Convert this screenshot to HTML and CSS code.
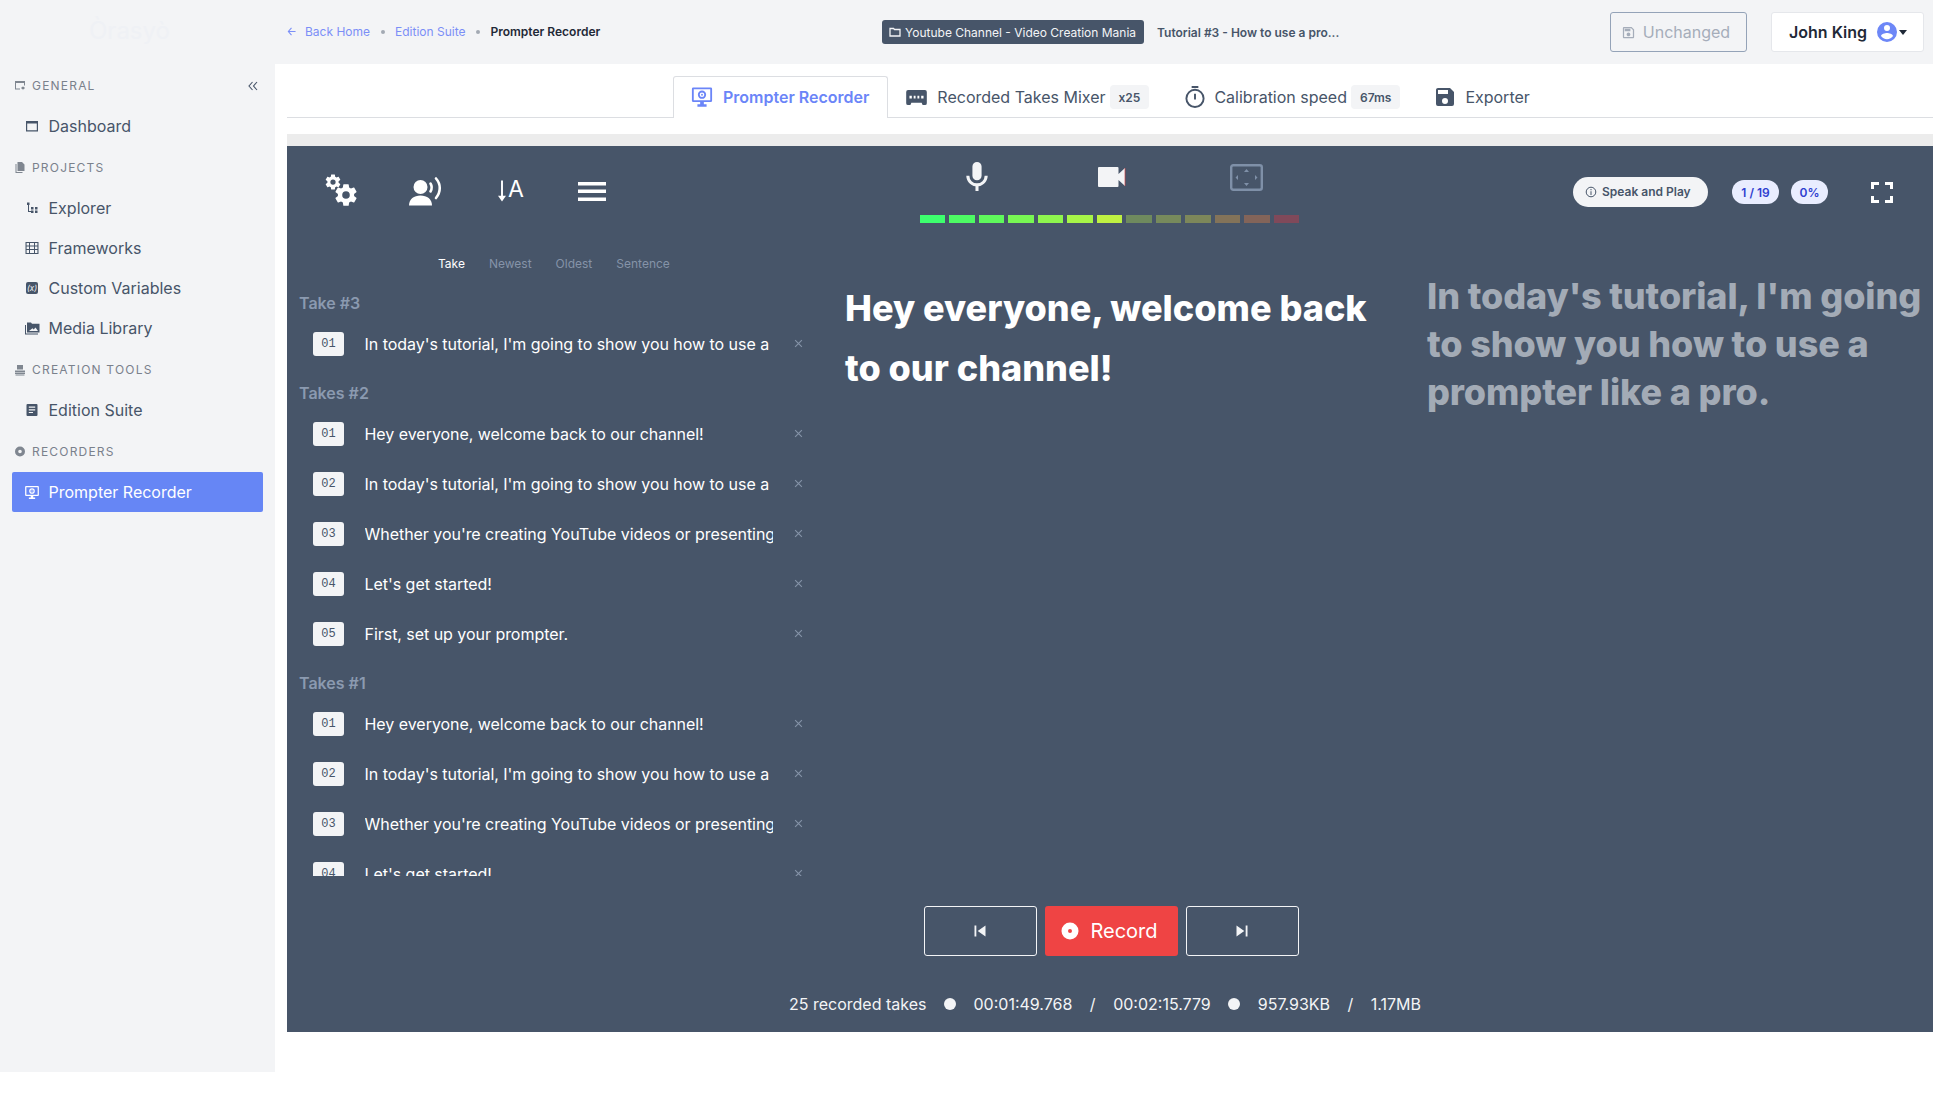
FILE: index.html
```html
<!DOCTYPE html>
<html lang="en">
<head>
<meta charset="utf-8">
<title>Prompter Recorder</title>
<link rel="stylesheet" href="styles.css">
</head>
<body>
<svg class="defs" width="0" height="0" aria-hidden="true">
  <symbol id="cog" viewBox="0 0 24 24"><path d="M12,15.5A3.5,3.5 0 0,1 8.5,12A3.5,3.5 0 0,1 12,8.5A3.5,3.5 0 0,1 15.5,12A3.5,3.5 0 0,1 12,15.5M19.43,12.97C19.47,12.65 19.5,12.33 19.5,12C19.5,11.67 19.47,11.34 19.43,11L21.54,9.37C21.73,9.22 21.78,8.95 21.66,8.73L19.66,5.27C19.54,5.05 19.27,4.96 19.05,5.05L16.56,6.05C16.04,5.66 15.5,5.32 14.87,5.07L14.5,2.42C14.46,2.18 14.25,2 14,2H10C9.75,2 9.54,2.18 9.5,2.42L9.13,5.07C8.5,5.32 7.96,5.66 7.44,6.05L4.95,5.05C4.73,4.96 4.46,5.05 4.34,5.27L2.34,8.73C2.21,8.95 2.27,9.22 2.46,9.37L4.57,11C4.53,11.34 4.5,11.67 4.5,12C4.5,12.33 4.53,12.65 4.57,12.97L2.46,14.63C2.27,14.78 2.21,15.05 2.34,15.27L4.34,18.73C4.46,18.95 4.73,19.03 4.95,18.95L7.44,17.94C7.96,18.34 8.5,18.68 9.13,18.93L9.5,21.58C9.54,21.82 9.75,22 10,22H14C14.25,22 14.46,21.82 14.5,21.58L14.87,18.93C15.5,18.67 16.04,18.34 16.56,17.94L19.05,18.95C19.27,19.03 19.54,18.95 19.66,18.73L21.66,15.27C21.78,15.05 21.73,14.78 21.54,14.63L19.43,12.97Z"/></symbol>
  <symbol id="monitor" viewBox="0 0 24 24"><path fill-rule="evenodd" d="M2.5 1.5H21.5A1.5 1.5 0 0 1 23 3V16A1.5 1.5 0 0 1 21.5 17.5H14V20H17V22.5H7V20H10V17.5H2.5A1.5 1.5 0 0 1 1 16V3A1.5 1.5 0 0 1 2.5 1.5ZM3 3.5V15.5H21V3.5ZM12 5A4.5 4.5 0 1 1 12 14A4.5 4.5 0 1 1 12 5ZM12 7A2.5 2.5 0 1 0 12 12A2.5 2.5 0 1 0 12 7ZM12 8.5A1 1 0 1 1 12 10.5A1 1 0 1 1 12 8.5Z"/></symbol>
</svg>

<header class="topbar">
  <div class="logo">Òrasyò</div>
  <nav class="crumbs">
    <svg class="crumb-arrow" viewBox="0 0 10 10"><path d="M5 1 1.5 5 5 9M1.5 5H9.5"/></svg>
    <a class="crumb-link">Back Home</a>
    <i class="crumb-dot"></i>
    <a class="crumb-link">Edition Suite</a>
    <i class="crumb-dot"></i>
    <b class="crumb-current">Prompter Recorder</b>
  </nav>
  <div class="chip">
    <svg class="chip-icon" viewBox="0 0 12 12"><path d="M1 2.5H4.5L5.5 3.5H11V10H1Z"/></svg>
    <span>Youtube Channel - Video Creation Mania</span>
  </div>
  <div class="doc-title">Tutorial #3 - How to use a pro...</div>
  <div class="top-actions">
    <button class="btn-unchanged">
      <svg class="ico-16" viewBox="0 0 24 24"><path d="M17 3H5C3.89 3 3 3.9 3 5V19C3 20.1 3.89 21 5 21H19C20.1 21 21 20.1 21 19V7L17 3M19 19H5V5H16.17L19 7.83V19M12 12C10.34 12 9 13.34 9 15S10.34 18 12 18 15 16.66 15 15 13.66 12 12 12M6 6H15V10H6V6Z"/></svg>
      Unchanged
    </button>
    <button class="btn-user">
      <span>John King</span>
      <svg class="user-ico" viewBox="0 0 24 24"><path d="M12,19.2C9.5,19.2 7.29,17.92 6,16C6.03,14 10,12.9 12,12.9C14,12.9 17.97,14 18,16C16.71,17.92 14.5,19.2 12,19.2M12,5A3,3 0 0,1 15,8A3,3 0 0,1 12,11A3,3 0 0,1 9,8A3,3 0 0,1 12,5M12,2A10,10 0 0,0 2,12A10,10 0 0,0 12,22A10,10 0 0,0 22,12A10,10 0 0,0 12,2Z"/></svg>
      <i class="caret"></i>
    </button>
  </div>
</header>

<div class="layout">
  <aside class="sidebar">
    <div class="side-head">
      <svg class="sec-ico" viewBox="0 0 12 12"><path fill-rule="evenodd" d="M1 1.5H11V6H10V3.5H2V9H6V10H1ZM9 6.5 9.5 7.5 10.7 7.5 10.2 8.5 10.7 9.5 9.5 9.5 9 10.8 8.5 9.5 7.3 9.5 7.8 8.5 7.3 7.5 8.5 7.5Z"/></svg>
      <span>General</span>
      <svg class="collapse" viewBox="0 0 10 10"><path d="M4.5 1 1 5 4.5 9M9 1 5.5 5 9 9"/></svg>
    </div>
    <a class="nav-item">
      <svg class="nav-ico" viewBox="0 0 14 14"><path fill-rule="evenodd" d="M1 2H13V12.5H1ZM2.2 4.6V11.3H11.8V4.6Z"/></svg>
      Dashboard
    </a>
    <div class="side-head">
      <svg class="sec-ico" viewBox="0 0 12 12"><path d="M3.5 0.5H8L10.5 3V9.5H3.5ZM2.5 2.5V10.5H8.5V11.5H1.5V2.5Z"/></svg>
      <span>Projects</span>
    </div>
    <a class="nav-item">
      <svg class="nav-ico" viewBox="0 0 14 14"><path d="M2 1.5H4.5V4H2ZM3 4H4V10H6V11H3ZM6 6H8.5V8.5H6ZM6 9.5H8.5V12H6ZM10 6H12.5V8.5H10ZM10 9.5H12.5V12H10Z"/></svg>
      Explorer
    </a>
    <a class="nav-item">
      <svg class="nav-ico" viewBox="0 0 14 14"><path fill-rule="evenodd" d="M0.5 1H13.5V13H0.5ZM1.6 2.1V4.4H4V2.1ZM5 2.1V4.4H9V2.1ZM10 2.1V4.4H12.4V2.1ZM1.6 5.4V8H4V5.4ZM5 5.4V8H9V5.4ZM10 5.4V8H12.4V5.4ZM1.6 9V11.9H4V9ZM5 9V11.9H9V9ZM10 9V11.9H12.4V9Z"/></svg>
      Frameworks
    </a>
    <a class="nav-item">
      <svg class="nav-ico" viewBox="0 0 14 14"><rect x="1" y="1" width="12" height="12" rx="2"/><text class="var-text" x="7" y="9.8">(x)</text></svg>
      Custom Variables
    </a>
    <a class="nav-item">
      <svg class="nav-ico nav-ico-wide" viewBox="0 0 16 14"><path fill-rule="evenodd" d="M3 1H7L8 2.2H15.5V11H3ZM5 9.5H14L11.5 6 9.7 8 8.5 6.8ZM1 3.5H2V12H14V13H1Z"/></svg>
      Media Library
    </a>
    <div class="side-head">
      <svg class="sec-ico" viewBox="0 0 12 12"><path d="M3 1.5H9V6H3ZM1 7H11V9H1ZM1 9.5H11V10.5H1ZM1.5 11H10.5V12H1.5Z"/></svg>
      <span>Creation Tools</span>
    </div>
    <a class="nav-item">
      <svg class="nav-ico" viewBox="0 0 14 14"><path fill-rule="evenodd" d="M2.5 1H11.5A1 1 0 0 1 12.5 2V12A1 1 0 0 1 11.5 13H2.5A1 1 0 0 1 1.5 12V2A1 1 0 0 1 2.5 1ZM3.8 3.5V4.7H10.2V3.5ZM3.8 6.2V7.4H10.2V6.2ZM3.8 8.9V10.1H8V8.9Z"/></svg>
      Edition Suite
    </a>
    <div class="side-head">
      <svg class="sec-ico" viewBox="0 0 12 12"><path fill-rule="evenodd" d="M6 1A5 5 0 1 1 6 11A5 5 0 1 1 6 1ZM6 4.2A1.8 1.8 0 1 0 6 7.8A1.8 1.8 0 1 0 6 4.2Z"/></svg>
      <span>Recorders</span>
    </div>
    <a class="nav-item nav-active">
      <svg class="nav-ico nav-ico-wide"><use href="#monitor"/></svg>
      Prompter Recorder
    </a>
  </aside>

  <main class="main">
    <div class="tabs">
      <a class="tab tab-active">
        <svg class="tab-ico"><use href="#monitor"/></svg>
        Prompter Recorder
      </a>
      <a class="tab">
        <svg class="tab-ico tab-ico-tape" viewBox="1 4 22 16"><path fill-rule="evenodd" d="M3 4H21A2 2 0 0 1 23 6V18A2 2 0 0 1 21 20H18.5L17.5 17.5H6.5L5.5 20H3A2 2 0 0 1 1 18V6A2 2 0 0 1 3 4ZM4.5 10V13H7V10ZM9 10V13H11V10ZM13 10V13H15V10ZM17 10V13H19.5V10Z"/></svg>
        Recorded Takes Mixer
        <span class="tab-badge">x25</span>
      </a>
      <a class="tab">
        <svg class="tab-ico tab-ico-watch" viewBox="2 1 20 23"><path fill-rule="evenodd" d="M8.5 1H15.5V3H8.5ZM12 4A10 10 0 1 1 12 24A10 10 0 1 1 12 4ZM12 6A8 8 0 1 0 12 22A8 8 0 1 0 12 6ZM11 9H13V15H11Z"/></svg>
        Calibration speed
        <span class="tab-badge">67ms</span>
      </a>
      <a class="tab">
        <svg class="tab-ico tab-ico-save" viewBox="3 3 18 18"><path d="M15,9H5V5H15M12,19A3,3 0 0,1 9,16A3,3 0 0,1 12,13A3,3 0 0,1 15,16A3,3 0 0,1 12,19M17,3H5C3.89,3 3,3.9 3,5V19A2,2 0 0,0 5,21H19A2,2 0 0,0 21,19V7L17,3Z"/></svg>
        Exporter
      </a>
    </div>
    <div class="strip"></div>

    <section class="panel">
      <div class="toolbar">
        <div class="tools">
          <span class="tool">
            <span class="gears">
              <svg class="gear-s"><use href="#cog"/></svg>
              <svg class="gear-l"><use href="#cog"/></svg>
            </span>
          </span>
          <span class="tool">
            <svg class="ico-speak" viewBox="0 0 34 30"><circle cx="11.5" cy="11" r="7"/><path d="M0 29.5C0 23 5 19.5 11.5 19.5S23 23 23 29.5Z"/><path class="wave" d="M21.5 7.5C23 10 23 13 21.5 15.5M27 2.5C32 8 32 16 27 22" /></svg>
          </span>
          <span class="tool tool-sort">
            <svg class="ico-arrow" viewBox="0 0 10 26"><path d="M3.8 0H6.2V19H10L5 26 0 19H3.8Z"/></svg>
            <span class="sort-a">A</span>
          </span>
          <span class="tool tool-menu">
            <svg class="ico-menu" viewBox="0 0 28 19"><path d="M0 0H28V3.5H0ZM0 7.5H28V11H0ZM0 15.5H28V19H0Z"/></svg>
          </span>
        </div>

        <div class="meter">
          <div class="meter-icons">
            <span class="meter-cell">
              <svg class="ico-mic" viewBox="5 2 14 19"><path d="M12,2A3,3 0 0,1 15,5V11A3,3 0 0,1 12,14A3,3 0 0,1 9,11V5A3,3 0 0,1 12,2M19,11C19,14.53 16.39,17.44 13,17.93V21H11V17.93C7.61,17.44 5,14.53 5,11H7A5,5 0 0,0 12,16A5,5 0 0,0 17,11H19Z"/></svg>
            </span>
            <span class="meter-cell">
              <svg class="ico-cam" viewBox="0 0 28 20"><path d="M1 0H19.5A1 1 0 0 1 20.5 1V7L27 1V19L20.5 13V19A1 1 0 0 1 19.5 20H1A1 1 0 0 1 0 19V1A1 1 0 0 1 1 0Z"/><path class="cam-edge" d="M27 1V19"/></svg>
            </span>
            <span class="meter-cell">
              <svg class="ico-focus" viewBox="0 0 33 27"><rect class="focus-box" x="1.2" y="1.2" width="30.6" height="24.6" rx="2"/><path class="focus-arrow" d="M16.5 5 19 8H14ZM16.5 22 14 19H19ZM5.5 13.5 8 11V16ZM27.5 13.5 25 16V11Z"/></svg>
            </span>
          </div>
          <div class="bars">
            <i class="bar b1"></i><i class="bar b2"></i><i class="bar b3"></i><i class="bar b4"></i><i class="bar b5"></i><i class="bar b6"></i><i class="bar b7"></i><i class="bar b8"></i><i class="bar b9"></i><i class="bar b10"></i><i class="bar b11"></i><i class="bar b12"></i><i class="bar b13"></i>
          </div>
        </div>

        <div class="status-tools">
          <span class="speak-pill">
            <svg class="info" viewBox="0 0 12 12"><circle class="info-ring" cx="6" cy="6" r="4.8"/><path d="M5.5 5.2H6.5V9H5.5ZM5.5 3H6.5V4.2H5.5Z"/></svg>
            Speak and Play
          </span>
          <span class="count-pill count-pages">1 / 19</span>
          <span class="count-pill count-pct">0%</span>
          <svg class="ico-full" viewBox="0 0 22 21"><path d="M0 0H8V3H3V7H0ZM14 0H22V7H19V3H14ZM0 14H3V18H8V21H0ZM19 14H22V21H14V18H19Z"/></svg>
        </div>
      </div>

      <div class="stage">
        <div class="takes">
          <div class="filters">
            <a class="filter filter-on">Take</a>
            <a class="filter">Newest</a>
            <a class="filter">Oldest</a>
            <a class="filter">Sentence</a>
          </div>
          <div class="take-list">
            <h3 class="take-head">Take #3</h3>
            <div class="take-row"><span class="num">01</span><span class="line">In today's tutorial, I'm going to show you how to use a prompter like a pro.</span><svg class="rm" viewBox="0 0 8 8"><path d="M1 1 7 7M7 1 1 7"/></svg></div>

            <h3 class="take-head">Takes #2</h3>
            <div class="take-row"><span class="num">01</span><span class="line">Hey everyone, welcome back to our channel!</span><svg class="rm" viewBox="0 0 8 8"><path d="M1 1 7 7M7 1 1 7"/></svg></div>
            <div class="take-row"><span class="num">02</span><span class="line">In today's tutorial, I'm going to show you how to use a prompter like a pro.</span><svg class="rm" viewBox="0 0 8 8"><path d="M1 1 7 7M7 1 1 7"/></svg></div>
            <div class="take-row"><span class="num">03</span><span class="line">Whether you're creating YouTube videos or presenting a talk.</span><svg class="rm" viewBox="0 0 8 8"><path d="M1 1 7 7M7 1 1 7"/></svg></div>
            <div class="take-row"><span class="num">04</span><span class="line">Let's get started!</span><svg class="rm" viewBox="0 0 8 8"><path d="M1 1 7 7M7 1 1 7"/></svg></div>
            <div class="take-row"><span class="num">05</span><span class="line">First, set up your prompter.</span><svg class="rm" viewBox="0 0 8 8"><path d="M1 1 7 7M7 1 1 7"/></svg></div>

            <h3 class="take-head">Takes #1</h3>
            <div class="take-row"><span class="num">01</span><span class="line">Hey everyone, welcome back to our channel!</span><svg class="rm" viewBox="0 0 8 8"><path d="M1 1 7 7M7 1 1 7"/></svg></div>
            <div class="take-row"><span class="num">02</span><span class="line">In today's tutorial, I'm going to show you how to use a prompter like a pro.</span><svg class="rm" viewBox="0 0 8 8"><path d="M1 1 7 7M7 1 1 7"/></svg></div>
            <div class="take-row"><span class="num">03</span><span class="line">Whether you're creating YouTube videos or presenting a talk.</span><svg class="rm" viewBox="0 0 8 8"><path d="M1 1 7 7M7 1 1 7"/></svg></div>
            <div class="take-row"><span class="num">04</span><span class="line">Let's get started!</span><svg class="rm" viewBox="0 0 8 8"><path d="M1 1 7 7M7 1 1 7"/></svg></div>
          </div>
        </div>
        <div class="prompt-now">Hey everyone, welcome back to our channel!</div>
        <div class="prompt-next">In today's tutorial, I'm going to show you how to use a prompter like a pro.</div>
      </div>

      <div class="controls">
        <button class="ctl ctl-prev"><svg class="skip" viewBox="0 0 24 24"><path d="M6,18V6H8V18H6M9.5,12L18,6V18L9.5,12Z"/></svg></button>
        <button class="ctl-record">
          <svg class="rec-ico" viewBox="0 0 18 18"><path fill-rule="evenodd" d="M9 0.5A8.5 8.5 0 1 1 9 17.5A8.5 8.5 0 1 1 9 0.5ZM9 7A2 2 0 1 0 9 11A2 2 0 1 0 9 7Z"/></svg>
          Record
        </button>
        <button class="ctl ctl-next"><svg class="skip" viewBox="0 0 24 24"><path d="M16,18H18V6H16M6,18L14.5,12L6,6V18Z"/></svg></button>
      </div>

      <div class="stats">
        <span>25 recorded takes</span>
        <i class="stat-dot"></i>
        <span>00:01:49.768</span>
        <span>/</span>
        <span>00:02:15.779</span>
        <i class="stat-dot"></i>
        <span>957.93KB</span>
        <span>/</span>
        <span>1.17MB</span>
      </div>
    </section>
  </main>
</div>
</body>
</html>
```

FILE: styles.css
```css
* { box-sizing: border-box; }
html, body { margin: 0; padding: 0; }
body {
  width: 1933px;
  height: 1096px;
  overflow: hidden;
  background: #fff;
  font-family: Inter, "Noto Sans", sans-serif;
  font-size: 16px;
  color: #475569;
}
a { text-decoration: none; }
button { font-family: inherit; cursor: pointer; }
svg { display: block; fill: currentColor; flex: none; }
.defs { position: absolute; }

/* top bar */
.topbar {
  height: 64px;
  background: #f3f4f6;
  display: grid;
  grid-template-columns: 287px 595px auto 1fr auto;
  align-items: center;
}
.logo {
  padding-left: 89px;
  font-size: 24px;
  color: #eff1f5;
  margin-top: -4px;
}
.crumbs {
  display: flex;
  align-items: center;
  font-size: 12px;
  margin-top: -1px;
}
.crumb-arrow { width: 9px; height: 9px; fill: none; stroke: #7b8ff7; stroke-width: 1.2; margin-right: 9px; }
.crumb-link { color: #7b8ff7; }
.crumb-dot { width: 4px; height: 4px; border-radius: 50%; background: #a3a9b3; margin: 0 10.5px; }
.crumb-current { color: #1f2937; font-weight: 600; }
.chip {
  height: 24px;
  width: 262px;
  border-radius: 3px;
  background: #475569;
  color: #f3f4f6;
  font-size: 12px;
  display: flex;
  align-items: center;
  gap: 4px;
  padding-left: 7px;
  white-space: nowrap;
}
.chip-icon { width: 12px; height: 12px; fill: none; stroke: #f3f4f6; stroke-width: 1.3; }
.doc-title {
  margin-left: 13px;
  font-size: 12px;
  font-weight: 600;
  color: #475569;
  white-space: nowrap;
}
.top-actions { display: flex; gap: 24px; padding-right: 9px; }
.btn-unchanged {
  width: 137px;
  height: 40px;
  border: 1px solid #94a3b8;
  border-radius: 3px;
  background: #f3f4f6;
  color: #a5adba;
  font-size: 16px;
  display: flex;
  align-items: center;
  justify-content: center;
  gap: 7px;
  padding: 0 6px 0 0;
}
.ico-16 { width: 15px; height: 15px; }
.btn-user {
  width: 153px;
  height: 40px;
  border: 1px solid #e5e7eb;
  border-radius: 3px;
  background: #fff;
  color: #1f2937;
  font-size: 16px;
  font-weight: 600;
  display: flex;
  align-items: center;
  padding: 0 0 0 17px;
}
.user-ico { width: 24px; height: 24px; color: #6d87f7; margin-left: 8px; }
.caret { width: 0; height: 0; border-left: 4.5px solid transparent; border-right: 4.5px solid transparent; border-top: 5px solid #1f2937; margin-left: 0; }

/* layout */
.layout { display: flex; height: 1008px; }
.sidebar {
  width: 275px;
  flex: none;
  background: #f3f4f6;
  padding: 0 12px;
}
.side-head {
  display: flex;
  align-items: center;
  height: 42px;
  padding-left: 2px;
  font-size: 12px;
  letter-spacing: 1.2px;
  text-transform: uppercase;
  color: #7a818c;
  gap: 6px;
}
.sec-ico { width: 12px; height: 13px; color: #7f8690; }
.collapse { width: 10px; height: 10px; fill: none; stroke: #475569; stroke-width: 1.1; margin-left: auto; margin-right: 5px; margin-top: 2px; }
.nav-item {
  display: flex;
  align-items: center;
  height: 40px;
  color: #475569;
  padding-left: 13px;
}
.nav-ico { width: 14px; height: 14px; margin-right: 9.5px; color: #475569; fill: currentColor; }
.nav-ico-wide { width: 16px; height: 15px; margin-left: -1px; margin-right: 8.5px; }
.var-text { fill: #f3f4f6; font-size: 8px; font-style: italic; text-anchor: middle; font-family: Inter, sans-serif; }
.nav-active {
  background: #6686f5;
  color: #fff;
  border-radius: 2px;
}
.nav-active .nav-ico { color: #fff; }

/* main */
.main { flex: 1; min-width: 0; padding-left: 12px; display: flex; flex-direction: column; }
.tabs {
  height: 54px;
  padding-top: 12px;
  padding-left: 386px;
  border-bottom: 1px solid #dcdee2;
  display: flex;
  color: #475569;
}
.tab {
  height: 42px;
  padding: 0 17px 1px;
  display: flex;
  align-items: center;
  gap: 10px;
  color: #475569;
  border: 1px solid transparent;
  border-bottom: 0;
  white-space: nowrap;
}
.tab-active {
  height: 42px;
  background: #fff;
  border-color: #dcdee2;
  border-radius: 3px 3px 0 0;
  color: #6b85f8;
  font-weight: 600;
  padding: 0 18px 1px 17px;
}
.tab-ico { width: 22px; height: 22px; }
.tab-ico-tape { width: 21px; height: 15px; }
.tab-ico-watch { width: 20px; height: 22px; margin-right: -1px; }
.tab-ico-save { width: 18px; height: 18px; margin-right: 1px; }
.tab-badge {
  height: 24px;
  padding: 0 9px;
  margin-left: -6px;
  border-radius: 4px;
  background: #f3f4f6;
  font-size: 12px;
  font-weight: 600;
  display: flex;
  align-items: center;
}
.strip { height: 12px; margin-top: 16px; background: #ececec; flex: none; }

/* panel */
.panel {
  height: 886px;
  background: #475569;
  color: #f3f4f6;
  display: flex;
  flex-direction: column;
  overflow: hidden;
}
.toolbar {
  height: 100px;
  flex: none;
  display: grid;
  grid-template-columns: 1fr auto 1fr;
}
.tools { display: flex; height: 90px; align-items: center; padding-left: 13px; color: #fff; }
.tool { width: 84px; display: flex; align-items: center; justify-content: center; }
.tool-menu { margin-left: -2px; }
.gears { width: 33px; height: 33px; display: grid; grid-template-columns: 15px 18px; grid-template-rows: 15px 18px; }
.gear-s { width: 18px; height: 18px; grid-area: 1 / 1; margin: -2px 0 0 -2px; }
.gear-l { width: 26px; height: 26px; grid-area: 2 / 2; margin: -8px 0 0 -8px; }
.ico-speak { width: 34px; height: 30px; }
.wave { fill: none; stroke: #fff; stroke-width: 2.6; stroke-linecap: round; }
.tool-sort { gap: 2px; padding-left: 2px; }
.ico-arrow { width: 8px; height: 24px; }
.sort-a { font-size: 23px; line-height: 24px; font-weight: 400; margin-top: -4px; }
.ico-menu { width: 28px; height: 19px; }

.meter { width: 379px; padding-top: 16px; margin-left: -1px; }
.meter-icons { display: flex; justify-content: center; height: 29px; margin: 0 -13px; padding-left: 4px; }
.meter-cell { width: 135px; flex: none; display: flex; justify-content: center; align-items: center; }
.ico-mic { width: 22px; height: 29px; }
.ico-cam { width: 28px; height: 20px; color: #f3f4f6; margin-top: 1px; }
.cam-edge { stroke: #d04444; stroke-width: .7; fill: none; }
.ico-focus { width: 33px; height: 27px; margin-top: 1px; }
.focus-box { fill: none; stroke: #7f90a8; stroke-width: 2.4; }
.focus-arrow { fill: #7f90a8; }
.bars { display: flex; gap: 4px; margin-top: 24px; height: 8px; }
.bar { flex: 1; }
.b1 { background: #3dff6e; }
.b2 { background: #4dfb64; }
.b3 { background: #5ff95c; }
.b4 { background: #78f753; }
.b5 { background: #8ef54e; }
.b6 { background: #a7f548; }
.b7 { background: #bff142; }
.b8 { background: #6f8a5e; }
.b9 { background: #778a5c; }
.b10 { background: #7d875a; }
.b11 { background: #837359; }
.b12 { background: #836459; }
.b13 { background: #80495a; }

.status-tools { display: flex; height: 92px; align-items: center; justify-content: flex-end; padding-right: 40px; }
.speak-pill {
  width: 135px;
  height: 30px;
  border-radius: 15px;
  background: #f3f4f6;
  color: #475569;
  font-size: 12px;
  font-weight: 600;
  display: flex;
  align-items: center;
  gap: 5px;
  padding: 0 0 1px 12px;
  white-space: nowrap;
}
.info { width: 12px; height: 12px; }
.info-ring { fill: none; stroke: #475569; stroke-width: 1; }
.count-pill {
  height: 24px;
  border-radius: 12px;
  background: #e9edff;
  color: #2f3fd0;
  font-size: 12px;
  font-weight: 600;
  display: flex;
  align-items: center;
  justify-content: center;
}
.count-pages { width: 47px; margin-left: 24px; }
.count-pct { width: 37px; margin-left: 12px; }
.ico-full { width: 22px; height: 21px; margin-left: 43px; color: #fff; }

/* stage */
.stage { display: grid; grid-template-columns: 533px 25px 582px 1fr; height: 630px; flex: none; }
.takes { grid-column: 1; min-width: 0; height: 630px; display: flex; flex-direction: column; }
.filters { display: flex; gap: 24px; height: 34px; align-items: center; padding-left: 151px; font-size: 12px; }
.filter { color: #8593a8; }
.filter-on { color: #fff; }
.take-list { height: 596px; overflow: hidden; padding-left: 12px; }
.take-head { margin: 11px 0 4px; height: 24px; line-height: 24px; font-size: 16px; font-weight: 600; color: #8b9ab0; }
.take-row + .take-head { margin-top: 12px; }
.take-row { height: 50px; display: flex; align-items: center; padding-left: 14px; color: #fff; }
.num {
  width: 31px;
  height: 24px;
  flex: none;
  border-radius: 3px;
  background: #f3f4f6;
  color: #475569;
  font-family: "Liberation Mono", monospace;
  font-size: 12px;
  display: flex;
  align-items: center;
  justify-content: center;
}
.line { width: 408.5px; margin-left: 20.5px; overflow: hidden; white-space: nowrap; flex: none; letter-spacing: -0.04px; }
.rm { width: 9px; height: 9px; margin: -2px 0 0 21px; fill: none; stroke: #8593a8; stroke-width: 1; }
.prompt-now {
  grid-column: 3;
  padding-top: 32px;
  font-size: 36px;
  line-height: 60px;
  font-weight: 800;
  color: #fff;
  padding-right: 40px;
}
.prompt-next {
  grid-column: 4;
  padding-top: 26px;
  font-size: 36px;
  line-height: 48px;
  font-weight: 800;
  color: #a3abb6;
  letter-spacing: -0.1px;
}

/* controls */
.controls { display: flex; justify-content: center; gap: 8px; padding-top: 30px; flex: none; padding-left: 2px; }
.ctl {
  width: 113px;
  height: 50px;
  background: transparent;
  border: 1px solid #f3f4f6;
  border-radius: 3px;
  color: #f3f4f6;
  display: flex;
  align-items: center;
  justify-content: center;
}
.skip { width: 22px; height: 22px; }
.ctl-record {
  width: 133px;
  height: 50px;
  background: #ef4444;
  border: 0;
  border-radius: 3px;
  color: #fff;
  font-size: 20px;
  display: flex;
  align-items: center;
  justify-content: center;
  gap: 11px;
  padding: 0 3px 0 0;
}
.rec-ico { width: 18px; height: 18px; }
.stats {
  display: flex;
  justify-content: center;
  align-items: center;
  gap: 17.5px;
  margin-top: 36px;
  height: 24px;
  padding-right: 10px;
  color: #f3f4f6;
  white-space: nowrap;
}
.stat-dot { width: 12px; height: 12px; border-radius: 50%; background: #f3f4f6; }
```
